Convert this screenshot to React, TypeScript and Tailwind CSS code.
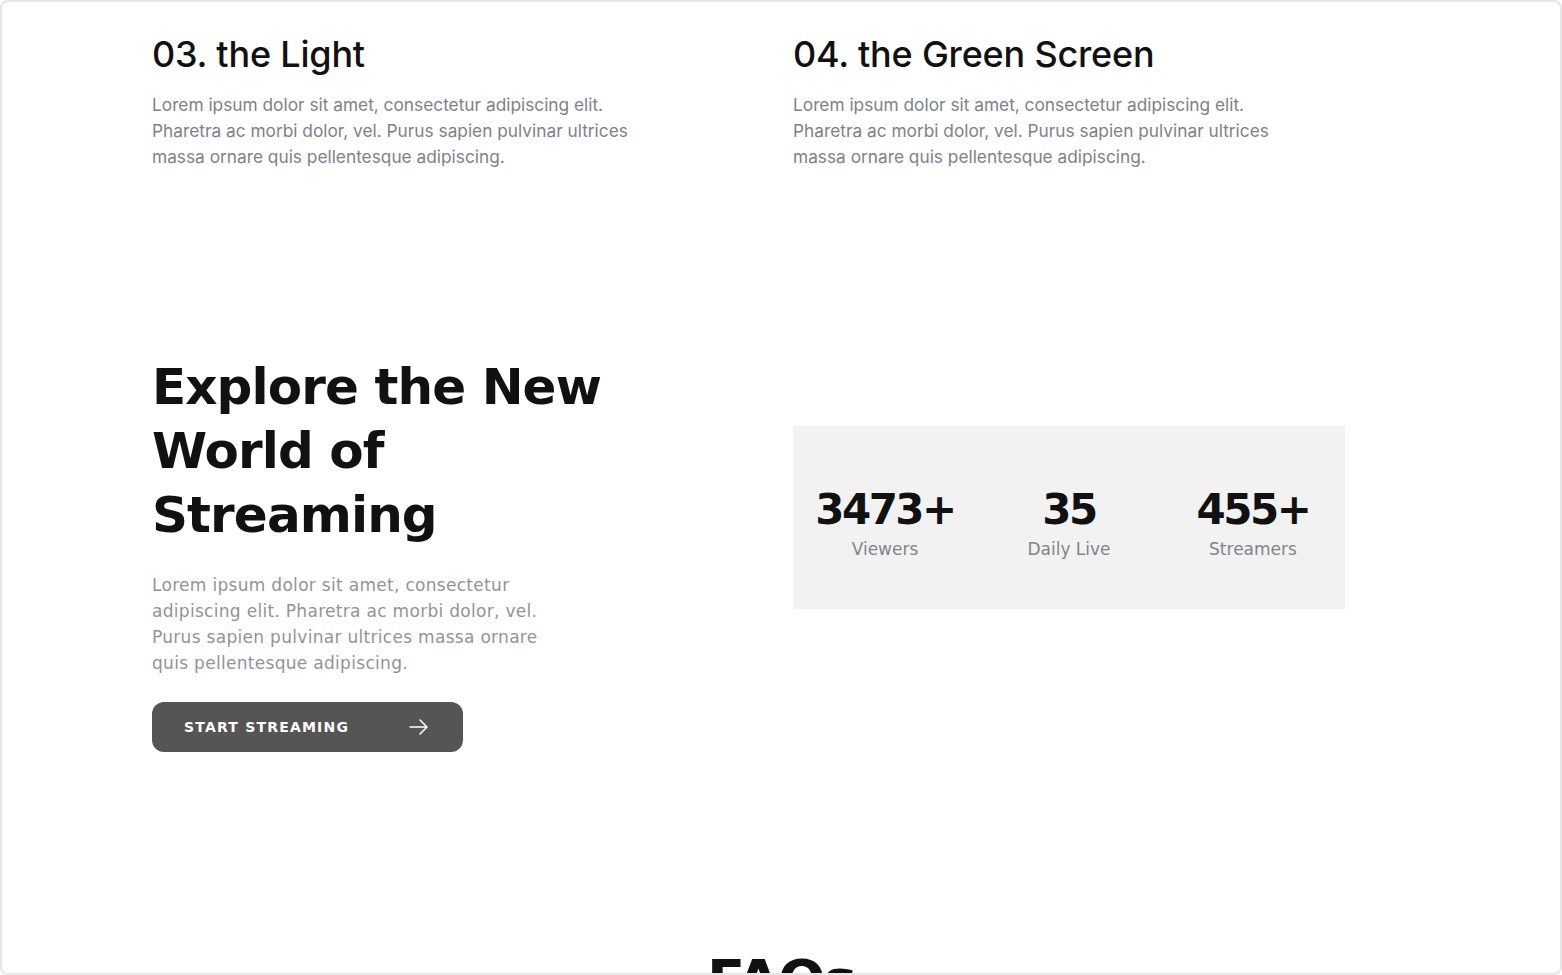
import React from "react";

const fig = { fontFamily: "Inter, 'Noto Sans', sans-serif" };
const mont = { fontFamily: "'DejaVu Sans', 'Noto Sans', sans-serif" };

function Step({ title }: { title: string }) {
  return (
    <div className="w-[641px]">
      <h3 className="text-[36px] leading-[44px] text-[#111111] font-medium tracking-[-0.2px]" style={fig}>
        {title}
      </h3>
      <p className="mt-[16px] text-[17.3px] leading-[26px] text-[#7d8189] w-[482px]" style={fig}>
        Lorem ipsum dolor sit amet, consectetur adipiscing elit. Pharetra ac morbi dolor, vel. Purus sapien pulvinar ultrices massa ornare quis pellentesque adipiscing.
      </p>
    </div>
  );
}

function Stat({ n, label }: { n: string; label: string }) {
  return (
    <div className="flex flex-col items-center pt-[12px]">
      <div className="text-[42px] leading-[48px] font-bold text-[#111111] tracking-[-2.5px]" style={mont}>
        {n}
      </div>
      <div className="mt-[3px] text-[17px] leading-[24px] text-[#80858c]" style={mont}>
        {label}
      </div>
    </div>
  );
}

export default function App() {
  return (
    <div className="w-full h-[975px] bg-white border-2 border-[#e6e6e6] rounded-lg overflow-hidden">
      <div className="pl-[150px]">
        <div className="flex pt-[30px]">
          <Step title="03. the Light" />
          <Step title="04. the Green Screen" />
        </div>
        <div className="flex items-start mt-[185px]">
          <div className="w-[641px]">
            <h2 className="text-[50px] leading-[64px] font-bold text-[#111111] w-[500px] tracking-[-0.9px]" style={mont}>
              Explore the New World of Streaming
            </h2>
            <p className="mt-[25px] text-[17px] leading-[26px] text-[#8f949b] w-[400px] tracking-[0.3px]" style={mont}>
              Lorem ipsum dolor sit amet, consectetur adipiscing elit. Pharetra ac morbi dolor, vel. Purus sapien pulvinar ultrices massa ornare quis pellentesque adipiscing.
            </p>
            <button className="mt-[26px] w-[311px] h-[50px] rounded-[12px] bg-[#555555] flex items-center pl-[32px] pr-[34px] justify-between text-white">
              <span className="text-[14px] font-bold tracking-[1.2px]" style={mont}>
                START STREAMING
              </span>
              <svg width="20" height="16" viewBox="0 0 20 16" fill="none" stroke="white" strokeWidth="1.5" strokeLinecap="round" strokeLinejoin="round">
                <path d="M1 8h17M11 1l7 7-7 7" />
              </svg>
            </button>
          </div>
          <div className="mt-[71px] w-[552px] h-[183px] bg-[#f2f2f2] grid grid-cols-3 items-center">
            <Stat n="3473+" label="Viewers" />
            <Stat n="35" label="Daily Live" />
            <Stat n="455+" label="Streamers" />
          </div>
        </div>
        <div className="mt-[196px] flex justify-center pr-[150px]">
          <h2 className="text-[56px] leading-[64px] font-bold text-[#111111] tracking-[-2px]" style={mont}>
            FAQs
          </h2>
        </div>
      </div>
    </div>
  );
}
